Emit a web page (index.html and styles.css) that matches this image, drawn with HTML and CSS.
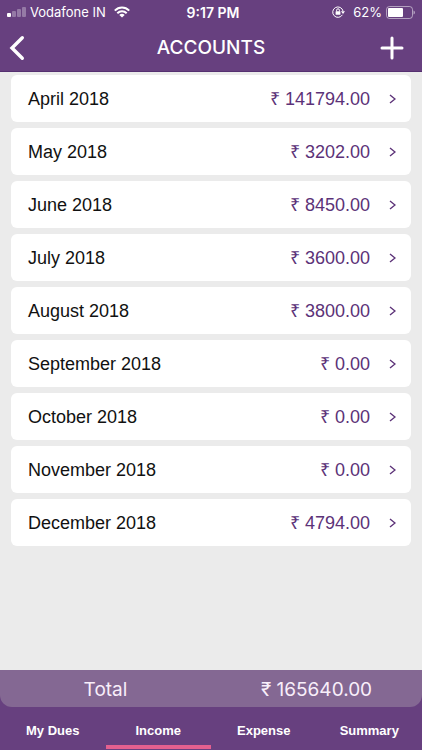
FILE: index.html
```html
<!DOCTYPE html>
<html lang="en">
  <head>
    <title>Accounts</title>
    <meta charset="UTF-8" />
    <meta name="viewport" content="width=device-width, initial-scale=1" />
    <link rel="stylesheet" href="styles.css">
  </head>
  <body>
    <header>
      <div class="status-bar">
        <div class="carrier">
          <svg width="19" height="12" viewBox="0 0 19 12" fill="#fff">
            <rect x="0" y="7" width="4" height="4" rx="1" />
            <g opacity="0.3">
              <rect x="5" y="5" width="4" height="6" rx="1" />
              <rect x="10" y="3" width="4" height="8" rx="1" />
              <rect x="15" y="1" width="4" height="10" rx="1" />
            </g>
          </svg>
          <span>Vodafone IN</span>
          <svg class="wifi" width="16" height="12" viewBox="0 0 16 12" fill="none" stroke="#fff" stroke-width="2">
            <path d="M0.8 4.6C4.9 0.5 11.1 0.5 15.2 4.6" />
            <path d="M3.3 7.2C6 4.6 10 4.6 12.7 7.2" />
            <path d="M8 11.5L5.3 8.9C6.9 7.5 9.1 7.5 10.7 8.9Z" fill="#fff" stroke="none" />
          </svg>
        </div>
        <div class="clock">9:17 PM</div>
        <div class="battery">
          <svg width="13" height="12" viewBox="0 0 13 12" fill="none" stroke="#fff">
            <path d="M10.4 8.8A5.2 5.2 0 1 1 11 5" />
            <path d="M8.9 5.2H13L11 7.9Z" fill="#fff" stroke="none" />
            <rect x="3.6" y="5.2" width="4.8" height="3.6" rx="0.5" fill="#fff" stroke="none" />
            <path d="M4.6 5.5V4.2A1.4 1.4 0 0 1 7.4 4.2V5.5" />
          </svg>
          <span>62%</span>
          <svg width="29" height="13" viewBox="0 0 29 13" fill="#fff">
            <rect x="0.5" y="0.5" width="26" height="12" rx="3" fill="none" stroke="#fff" opacity="0.5" />
            <rect x="2" y="2" width="15" height="9" rx="1" />
            <path d="M27.5 4.5Q29 5 29 6.5T27.5 8.5Z" opacity="0.5" />
          </svg>
        </div>
      </div>
      <div class="title-bar">
        <button class="icon-button" type="button" aria-label="Back">
          <svg width="16" height="26" viewBox="0 0 16 26" fill="none" stroke="#fff" stroke-width="3.4" stroke-linecap="round">
            <path d="M13.3 2.8L3 13L13.3 23.2" />
          </svg>
        </button>
        <h1>ACCOUNTS</h1>
        <button class="icon-button" type="button" aria-label="Add">
          <svg width="24" height="24" viewBox="0 0 24 24" fill="none" stroke="#fff" stroke-width="3" stroke-linecap="round">
            <path d="M12 2V22M2 12H22" />
          </svg>
        </button>
      </div>
    </header>

    <main>
      <ul class="months">
        <li><a href="#"><span>April 2018</span><span class="amount">₹ 141794.00</span><svg class="arrow" viewBox="0 0 7 10"><path d="M1 1L6 5L1 9" /></svg></a></li>
        <li><a href="#"><span>May 2018</span><span class="amount">₹ 3202.00</span><svg class="arrow" viewBox="0 0 7 10"><path d="M1 1L6 5L1 9" /></svg></a></li>
        <li><a href="#"><span>June 2018</span><span class="amount">₹ 8450.00</span><svg class="arrow" viewBox="0 0 7 10"><path d="M1 1L6 5L1 9" /></svg></a></li>
        <li><a href="#"><span>July 2018</span><span class="amount">₹ 3600.00</span><svg class="arrow" viewBox="0 0 7 10"><path d="M1 1L6 5L1 9" /></svg></a></li>
        <li><a href="#"><span>August 2018</span><span class="amount">₹ 3800.00</span><svg class="arrow" viewBox="0 0 7 10"><path d="M1 1L6 5L1 9" /></svg></a></li>
        <li><a href="#"><span>September 2018</span><span class="amount">₹ 0.00</span><svg class="arrow" viewBox="0 0 7 10"><path d="M1 1L6 5L1 9" /></svg></a></li>
        <li><a href="#"><span>October 2018</span><span class="amount">₹ 0.00</span><svg class="arrow" viewBox="0 0 7 10"><path d="M1 1L6 5L1 9" /></svg></a></li>
        <li><a href="#"><span>November 2018</span><span class="amount">₹ 0.00</span><svg class="arrow" viewBox="0 0 7 10"><path d="M1 1L6 5L1 9" /></svg></a></li>
        <li><a href="#"><span>December 2018</span><span class="amount">₹ 4794.00</span><svg class="arrow" viewBox="0 0 7 10"><path d="M1 1L6 5L1 9" /></svg></a></li>
      </ul>
    </main>

    <footer>
      <div class="total">
        <span>Total</span>
        <span>₹ 165640.00</span>
      </div>
      <nav class="tabs">
        <a href="#">My Dues</a>
        <a href="#" class="active">Income</a>
        <a href="#">Expense</a>
        <a href="#">Summary</a>
      </nav>
    </footer>
  </body>
</html>
```

FILE: styles.css
```css
* {
  box-sizing: border-box;
}
body {
  margin: 0;
  min-height: 100vh;
  display: flex;
  flex-direction: column;
  background-color: #ebebeb;
  font-family: "Liberation Sans", Arial, sans-serif;
}
a {
  color: inherit;
  text-decoration: none;
}
svg {
  display: block;
  flex: none;
}

/* header */
header {
  background-color: #67407f;
  color: #fff;
  font-family: Inter, sans-serif;
  border-bottom: 1px solid #553070;
}
.status-bar {
  display: grid;
  grid-template-columns: 1fr auto 1fr;
  align-items: center;
  height: 24px;
  padding: 0 7px;
  font-size: 13px;
}
.carrier,
.battery {
  display: flex;
  align-items: center;
  gap: 4px;
}
.wifi {
  margin-left: 4px;
}
.battery {
  justify-content: flex-end;
}
.battery span {
  margin-left: 4px;
}
.clock {
  padding-left: 4px;
  font-size: 14px;
  font-weight: 600;
}
.title-bar {
  display: flex;
  align-items: center;
  justify-content: space-between;
  height: 47px;
  padding: 0 18px 0 9px;
}
.title-bar h1 {
  flex: 1;
  margin: 0;
  padding-left: 17px;
  font-size: 19px;
  font-weight: 500;
  text-align: center;
}
.icon-button {
  padding: 0;
  border: none;
  background: none;
  cursor: pointer;
}

/* list of months */
main {
  flex: 1;
  padding: 3px 11px;
}
.months {
  display: flex;
  flex-direction: column;
  gap: 6px;
  margin: 0;
  padding: 0;
  list-style: none;
}
.months a {
  display: flex;
  align-items: center;
  height: 47px;
  padding: 0 15px 0 17px;
  background-color: #fff;
  border-radius: 6px;
  color: #111;
  font-size: 18px;
  line-height: 20px;
}
.amount {
  margin-left: auto;
  color: #5c3278;
}
.arrow {
  width: 7px;
  height: 10px;
  margin-left: 19px;
  fill: none;
  stroke: #5c3278;
  stroke-width: 1.4;
}

/* total and tabs */
footer {
  background-color: #67407f;
  color: #fff;
}
.total {
  display: grid;
  grid-template-columns: 1fr 1fr;
  height: 37px;
  background-color: #846893;
  border-radius: 0 0 12px 12px;
  color: #f8eefa;
  font-family: Inter, sans-serif;
  font-size: 19px;
  line-height: 40px;
  text-align: center;
}
.tabs {
  display: grid;
  grid-template-columns: repeat(4, 1fr);
  height: 43px;
  font-size: 13px;
  font-weight: bold;
  line-height: 35px;
  text-align: center;
}
.tabs a {
  padding-top: 6px;
  height: 42px;
}
.tabs .active {
  border-bottom: 4px solid #e4608f;
}
```
